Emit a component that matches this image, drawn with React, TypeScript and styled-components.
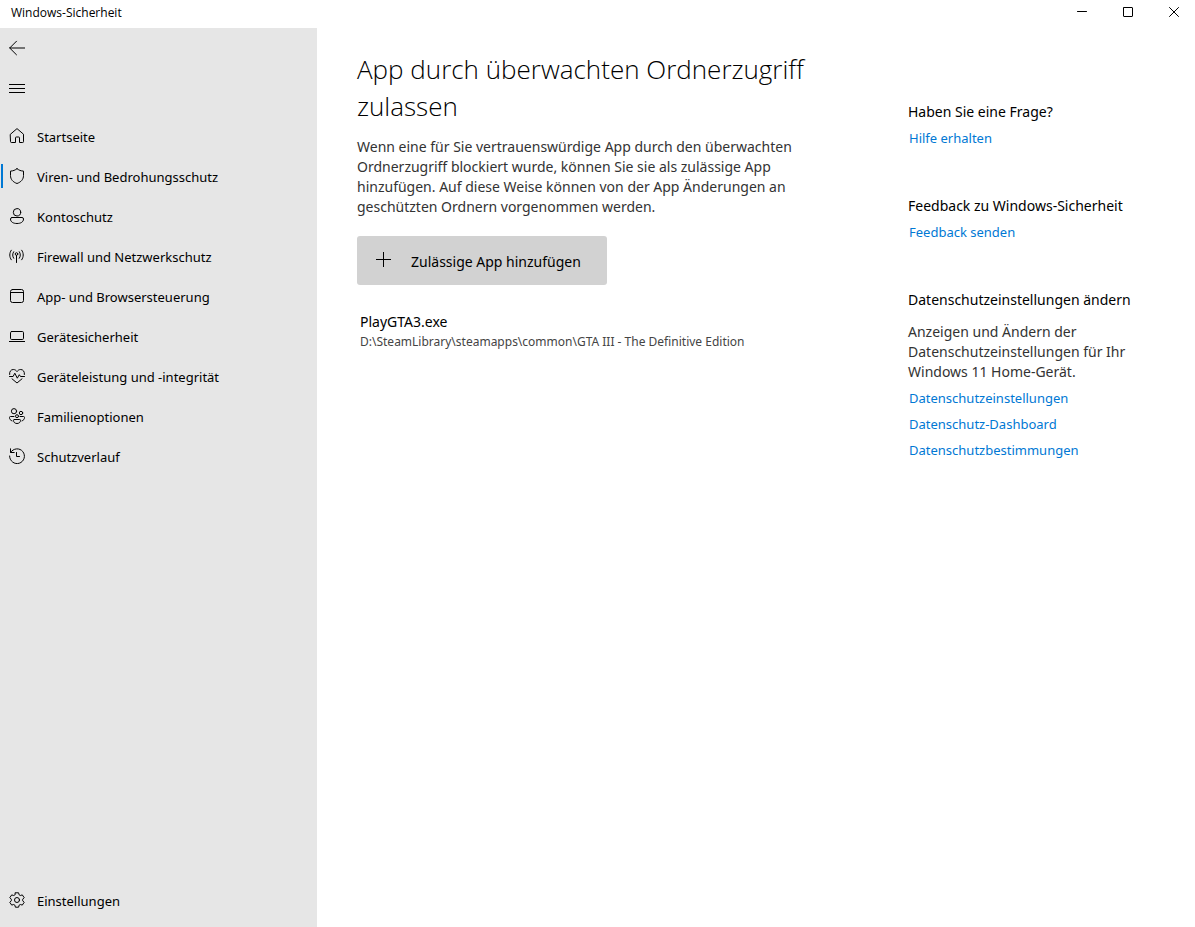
import React from "react";
import styled, { createGlobalStyle } from "styled-components";

const GlobalStyle = createGlobalStyle`
  * { box-sizing: border-box; }
  html, body, #root { height: 100%; }
  body {
    margin: 0;
    background: #fff;
    color: #000;
    font-family: "Noto Sans", "Open Sans", sans-serif;
    font-size: 13px;
    line-height: 20px;
  }
  h1, h2, p, ul { margin: 0; padding: 0; font-weight: 400; }
  ul { list-style: none; }
  button { font: inherit; color: inherit; border: 0; padding: 0; background: none; }
`;

const Window = styled.div`
  display: flex;
  flex-direction: column;
  min-height: 100vh;
`;

const TitleBar = styled.header`
  display: flex;
  justify-content: space-between;
  height: 28px;
  padding-left: 11px;
`;

const Title = styled.span`
  font-family: "Open Sans", sans-serif;
  font-size: 12px;
  line-height: 26px;
`;

const Captions = styled.div`
  display: flex;
`;

const CaptionButton = styled.button`
  display: flex;
  justify-content: center;
  width: 46px;
  height: 28px;
  padding: 4px 0 0 4px;
`;

const Body = styled.div`
  display: flex;
  flex: 1;
`;

const Sidebar = styled.nav`
  display: flex;
  flex-direction: column;
  flex: 0 0 317px;
  padding-bottom: 6px;
  background: #e6e6e6;
`;

const IconButton = styled.button`
  display: flex;
  align-items: center;
  width: 40px;
  height: 40px;
  padding-left: 9px;
`;

const NavList = styled.ul`
  padding-top: 9px;
  flex: 1;
`;

const NavLink = styled.a<{ $active?: boolean }>`
  display: flex;
  align-items: center;
  gap: 12px;
  height: 40px;
  padding-left: 9px;
  color: #000;
  text-decoration: none;
  background: ${(p) =>
    p.$active
      ? "linear-gradient(#0078d4, #0078d4) 1px 7px / 2px 24px no-repeat"
      : "none"};

  svg { margin-bottom: 2px; }
`;

const Content = styled.div`
  display: flex;
  flex: 1;
  justify-content: space-between;
  gap: 40px;
  padding: 23px 40px 40px;
`;

const Main = styled.main`
  flex: 0 1 460px;
`;

const Heading = styled.h1`
  font-family: "Open Sans", sans-serif;
  font-size: 26px;
  font-weight: 300;
  line-height: 37px;
`;

const Text = styled.p`
  color: #333;
  font-size: 14px;
`;

const Intro = styled(Text)`
  margin-top: 12px;
`;

const AddButton = styled.button`
  display: flex;
  align-items: center;
  gap: 19px;
  width: 250px;
  height: 49px;
  margin-top: 19px;
  padding: 2px 0 0 18px;
  border-radius: 3px;
  background: #d2d2d2;
  font-size: 14px;

  svg { margin-bottom: 4px; }
`;

const AppList = styled.ul`
  padding: 27px 3px 0;
`;

const AppName = styled.div`
  font-size: 14px;
`;

const AppPath = styled.div`
  color: #444;
  font-size: 12px;
`;

const Aside = styled.aside`
  display: flex;
  flex-direction: column;
  flex: 0 0 247px;
  gap: 48px;
  padding-top: 51px;
`;

const SectionTitle = styled.h2`
  font-size: 14px;
  line-height: 20px;
`;

const Links = styled.div`
  display: flex;
  flex-direction: column;
  align-items: flex-start;
  gap: 6px;
  padding: 6px 0 0 1px;
`;

const Link = styled.a`
  color: #0078d4;
  text-decoration: none;
`;

const PrivacyText = styled(Text)`
  max-width: 224px;
  margin-top: 12px;
`;

function Icon({ size = 16, children }: { size?: number; children: React.ReactNode }) {
  return (
    <svg
      width={size}
      height={size}
      viewBox={`0 0 ${size} ${size}`}
      fill="none"
      stroke="#000"
      strokeWidth="1"
      strokeLinecap="round"
      strokeLinejoin="round"
      aria-hidden="true"
    >
      {children}
    </svg>
  );
}

const navItems = [
  {
    label: "Startseite",
    icon: <path d="M1.500 6.200 8 .6l6.500 5.600v7.500a.8.8 0 0 1-.8.8H10.500V9.800a.8.8 0 0 0-.8-.8H7.300a.8.8 0 0 0-.8.8v4.700H2.300a.8.8 0 0 1-.8-.8z" />,
  },
  {
    label: "Viren- und Bedrohungsschutz",
    active: true,
    icon: <path d="M8 .7C6.200 2.200 4 3 1.500 3.100V7.500c0 3.900 2.500 6.600 6.500 8 4-1.400 6.500-4.100 6.500-8V3.100C12 3 9.800 2.200 8 .7z" />,
  },
  {
    label: "Kontoschutz",
    icon: (
      <>
        <circle cx="8" cy="4.300" r="3.700" />
        <path d="M3 9.500h10a1.500 1.500 0 0 1 1.500 1.500c0 3-2.800 4.500-6.500 4.500S1.500 14 1.500 11A1.500 1.500 0 0 1 3 9.500z" />
      </>
    ),
  },
  {
    label: "Firewall und Netzwerkschutz",
    icon: (
      <>
        <path d="M2.300 2.200C.2 5 .2 9 2.300 11.800M12.700 2.200c2.100 2.800 2.100 6.800 0 9.600M4.700 3.700c-1.400 2-1.400 4.600 0 6.600M10.300 3.700c1.400 2 1.400 4.600 0 6.600M7.500 7.500v7" />
        <circle cx="7.500" cy="6" r="1.300" />
      </>
    ),
  },
  {
    label: "App- und Browsersteuerung",
    icon: (
      <>
        <rect x="1.500" y="1.500" width="13" height="13" rx="2" />
        <path d="M1.500 4.500h13" />
      </>
    ),
  },
  {
    label: "Gerätesicherheit",
    icon: (
      <>
        <rect x="1.500" y="3.500" width="13" height="8" rx="1.200" />
        <path strokeLinecap="butt" d="M0 13.500h16" />
      </>
    ),
  },
  {
    label: "Geräteleistung und -integrität",
    icon: (
      <>
        <path d="M.6 6.500C.2 3.500 2 1.500 4.300 1.500 6 1.500 7.200 2.400 8 3.600c.8-1.200 2-2.100 3.700-2.100 2.300 0 4.100 2 3.700 5" />
        <path d="M.5 8.500h3.600l1.700-3.300 2.500 5 2-3.500 1.200 1.800h4" />
        <path d="M3 10.800 8 15l5-4.200" />
      </>
    ),
  },
  {
    label: "Familienoptionen",
    icon: (
      <>
        <circle cx="5" cy="3.200" r="2.600" />
        <circle cx="12" cy="5" r="1.700" />
        <circle cx="8" cy="8.200" r="1.500" />
        <path d="M5 8.500H1.500a1 1 0 0 0-1 1c0 1.700 1 2.900 2.500 3.400M11 8.500h3.500a1 1 0 0 1 1 1c0 1.700-1 2.900-2.500 3.400M5.300 11.500h5.400a.8.800 0 0 1 .8.800c0 2-1.500 3.200-3.500 3.200s-3.500-1.200-3.500-3.200a.8.800 0 0 1 .8-.8z" />
      </>
    ),
  },
  {
    label: "Schutzverlauf",
    icon: <path d="M1.500.8v3.700h3.700M1.700 4.300A7.400 7.400 0 1 1 .6 8M7.500 4.500v4h3" />,
  },
];

const privacyLinks = [
  "Datenschutzeinstellungen",
  "Datenschutz-Dashboard",
  "Datenschutzbestimmungen",
];

export default function App() {
  return (
    <Window>
      <GlobalStyle />
      <TitleBar>
        <Title>Windows-Sicherheit</Title>
        <Captions>
          <CaptionButton aria-label="Minimieren">
            <Icon><path d="M3.500 7.500h9" /></Icon>
          </CaptionButton>
          <CaptionButton aria-label="Maximieren">
            <Icon><rect x="3.500" y="3.500" width="9" height="9" rx=".5" /></Icon>
          </CaptionButton>
          <CaptionButton aria-label="Schließen">
            <Icon><path d="m3.500 3.500 9 9m0-9-9 9" /></Icon>
          </CaptionButton>
        </Captions>
      </TitleBar>
      <Body>
        <Sidebar>
          <IconButton aria-label="Zurück">
            <Icon><path d="M7.500 1.200.7 8l6.800 6.800M.7 8h15" /></Icon>
          </IconButton>
          <IconButton aria-label="Navigation öffnen">
            <Icon><path strokeLinecap="butt" d="M0 4.500h16M0 8.500h16M0 12.500h16" /></Icon>
          </IconButton>
          <NavList>
            {navItems.map((item) => (
              <li key={item.label}>
                <NavLink href="#" $active={item.active}>
                  <Icon>{item.icon}</Icon>
                  {item.label}
                </NavLink>
              </li>
            ))}
          </NavList>
          <NavLink href="#">
            <Icon>
              <circle cx="8" cy="8" r="2.500" />
              <path d="M6.400.8h3.200l.5 2 1.200.7 2-.6 1.900 2.800-1.500 1.500v1.600l1.500 1.500-1.900 2.800-2-.6-1.200.7-.5 2H6.400l-.5-2-1.200-.7-2 .6L.8 10.300l1.500-1.500V7.200L.8 5.700l1.900-2.800 2 .6 1.200-.7z" />
            </Icon>
            Einstellungen
          </NavLink>
        </Sidebar>
        <Content>
          <Main>
            <Heading>App durch überwachten Ordnerzugriff zulassen</Heading>
            <Intro>
              Wenn eine für Sie vertrauenswürdige App durch den überwachten
              Ordnerzugriff blockiert wurde, können Sie sie als zulässige App
              hinzufügen. Auf diese Weise können von der App Änderungen an
              geschützten Ordnern vorgenommen werden.
            </Intro>
            <AddButton>
              <Icon size={17}><path strokeLinecap="butt" d="M8.500 1v15M1 8.500h15" /></Icon>
              Zulässige App hinzufügen
            </AddButton>
            <AppList>
              <li>
                <AppName>PlayGTA3.exe</AppName>
                <AppPath>D:\SteamLibrary\steamapps\common\GTA III - The Definitive Edition</AppPath>
              </li>
            </AppList>
          </Main>
          <Aside>
            <section>
              <SectionTitle>Haben Sie eine Frage?</SectionTitle>
              <Links><Link href="#">Hilfe erhalten</Link></Links>
            </section>
            <section>
              <SectionTitle>Feedback zu Windows-Sicherheit</SectionTitle>
              <Links><Link href="#">Feedback senden</Link></Links>
            </section>
            <section>
              <SectionTitle>Datenschutzeinstellungen ändern</SectionTitle>
              <PrivacyText>
                Anzeigen und Ändern der Datenschutzeinstellungen für Ihr
                Windows 11 Home-Gerät.
              </PrivacyText>
              <Links>
                {privacyLinks.map((label) => (
                  <Link key={label} href="#">{label}</Link>
                ))}
              </Links>
            </section>
          </Aside>
        </Content>
      </Body>
    </Window>
  );
}
